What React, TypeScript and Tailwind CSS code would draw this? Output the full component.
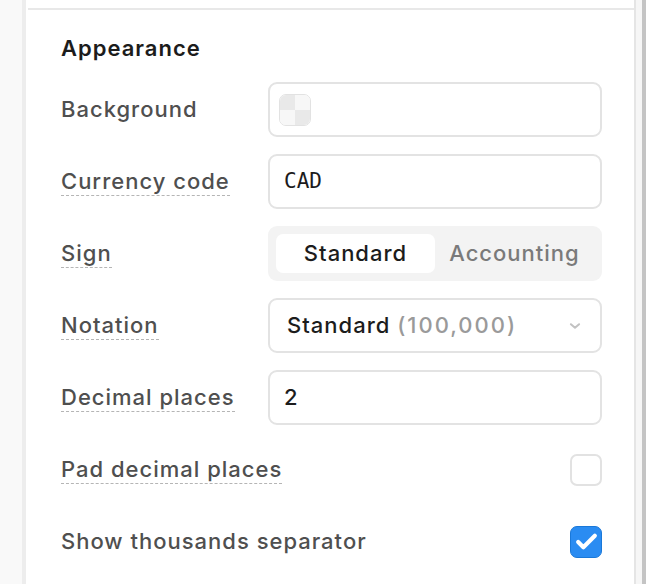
import React from "react";

const font = { fontFamily: "Inter, 'Noto Sans', sans-serif" };

// Label with an optional dashed hint underline
const Label: React.FC<{ text: string; hint?: boolean }> = ({ text, hint }) => (
  <span
    className={`text-[22px] leading-[27px] font-medium tracking-[1px] whitespace-nowrap text-[#4f4f4f] ${
      hint ? "border-b-[1.5px] border-dashed border-[#b5b5b5]" : ""
    }`}
  >
    {text}
  </span>
);

const Swatch = () => (
  <div className="w-[32px] h-[32px] rounded-[7px] border-[1.5px] border-[#e2e2e2] overflow-hidden grid grid-cols-2 grid-rows-2">
    <div className="bg-[#e9e9e9]" />
    <div className="bg-[#f7f7f7]" />
    <div className="bg-[#f7f7f7]" />
    <div className="bg-[#e9e9e9]" />
  </div>
);

const Checkbox: React.FC<{ checked?: boolean }> = ({ checked }) =>
  checked ? (
    <div className="w-[32px] h-[32px] rounded-[7px] bg-[#2a8cf2] border-[1.5px] border-[#1a78d8] flex items-center justify-center">
      <svg width="25" height="25" viewBox="0 0 24 24" fill="none">
        <path
          d="M4 12.5l5 5L20 6.5"
          stroke="white"
          strokeWidth="4"
          strokeLinecap="round"
          strokeLinejoin="round"
        />
      </svg>
    </div>
  ) : (
    <div className="w-[32px] h-[32px] rounded-[7px] bg-white border-2 border-[#e2e2e2]" />
  );

const boxClass =
  "h-[55px] w-full rounded-[9px] border-2 border-[#e3e3e3] bg-white flex items-center";

const text = "text-[22px] font-medium tracking-[1px]";

const LabelCell: React.FC<{ children: React.ReactNode }> = ({ children }) => (
  <div className="h-[55px] flex items-center min-w-0 overflow-visible">{children}</div>
);

export default function App() {
  return (
    <div className="flex w-[646px] h-[584px] overflow-hidden bg-white" style={font}>
      <div className="w-[22px] bg-[#f9f9f9] shrink-0" />
      <div className="w-[4px] bg-[#ededed] shrink-0" />

      <div className="flex-1 flex flex-col">
        <div className="h-[10px] ml-[2px] border-b-2 border-[#e8e8e8]" />

        <div className="pl-[35px] pr-[32px] pt-[24px]">
          <h2 className="text-[22px] leading-[28px] font-semibold tracking-[1px] text-[#1c1c1c]">
            Appearance
          </h2>

          <div className="mt-[20px] grid grid-cols-[207px_1fr] gap-y-[17px] items-center">
            <LabelCell>
              <Label text="Background" />
            </LabelCell>
            <div className={`${boxClass} pl-[9px]`}>
              <Swatch />
            </div>

            <LabelCell>
              <Label text="Currency code" hint />
            </LabelCell>
            <div className={`${boxClass} pl-[14px]`}>
              <span
                className="text-[21px] text-[#1c1c1c]"
                style={{ fontFamily: "'DejaVu Sans Mono', monospace" }}
              >
                CAD
              </span>
            </div>

            <LabelCell>
              <Label text="Sign" hint />
            </LabelCell>
            <div className="h-[55px] w-full rounded-[9px] bg-[#f3f3f3] p-[8px] grid grid-cols-2">
              <div className={`rounded-[7px] bg-white flex items-center justify-center ${text} text-[#1c1c1c]`}>
                Standard
              </div>
              <div className={`flex items-center justify-center ${text} text-[#7a7a7a]`}>
                Accounting
              </div>
            </div>

            <LabelCell>
              <Label text="Notation" hint />
            </LabelCell>
            <div className={`${boxClass} pl-[17px] pr-[18px] justify-between`}>
              <span className={`${text} text-[#1c1c1c]`}>
                Standard <span className="text-[#9a9a9a] tracking-[2px]">(100,000)</span>
              </span>
              <svg width="14" height="14" viewBox="0 0 24 24" fill="none">
                <path
                  d="M5 9l7 6 7-6"
                  stroke="#c2c2c2"
                  strokeWidth="3.5"
                  strokeLinecap="round"
                  strokeLinejoin="round"
                />
              </svg>
            </div>

            <LabelCell>
              <Label text="Decimal places" hint />
            </LabelCell>
            <div className={`${boxClass} pl-[14px]`}>
              <span className={`${text} text-[#1c1c1c]`}>2</span>
            </div>

            <LabelCell>
              <Label text="Pad decimal places" hint />
            </LabelCell>
            <div className="h-[55px] flex items-center justify-end">
              <Checkbox />
            </div>

            <LabelCell>
              <Label text="Show thousands separator" />
            </LabelCell>
            <div className="h-[55px] flex items-center justify-end">
              <Checkbox checked />
            </div>
          </div>
        </div>
      </div>

      <div className="w-[2px] bg-[#e5e5e5] shrink-0" />
      <div className="w-[6px] bg-[#f6f6f6] shrink-0" />
      <div className="w-[4px] bg-[#c4c4c4] shrink-0" />
    </div>
  );
}
